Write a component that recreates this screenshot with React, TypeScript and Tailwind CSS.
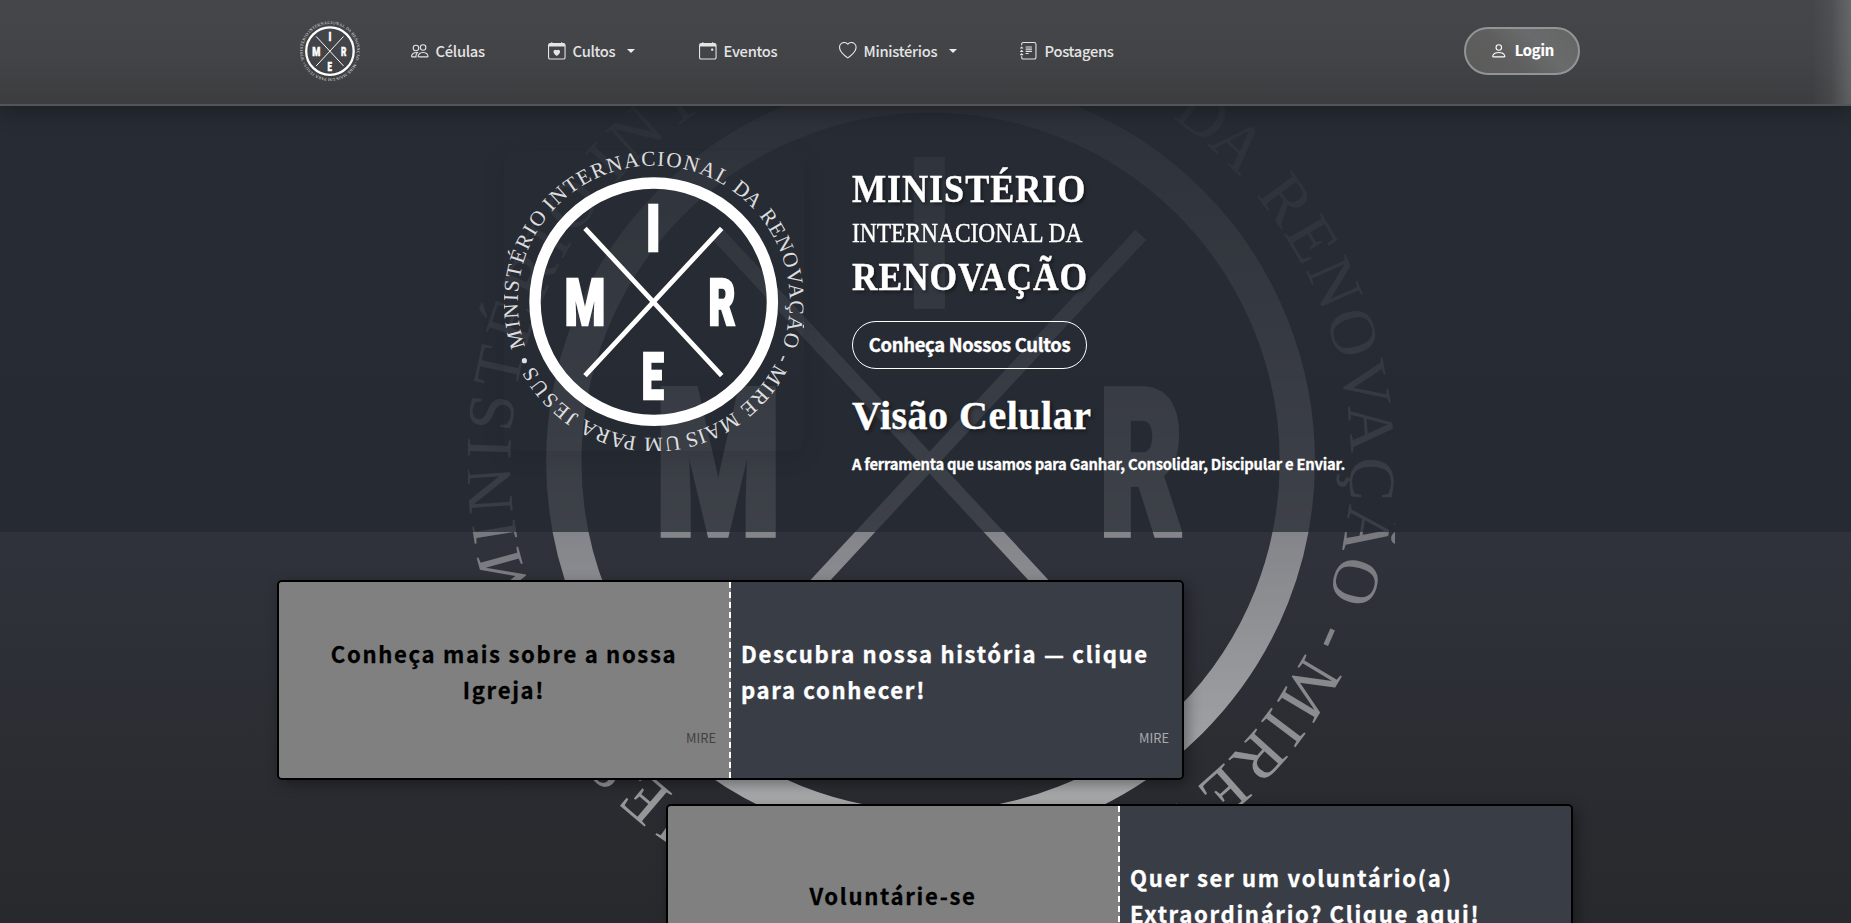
import { useId } from "react";
import { BsPeople, BsCalendarHeart, BsCalendarEvent, BsHeart, BsJournalText, BsPerson } from "react-icons/bs";

// Words on the ring with their start and end angles, clockwise from the top.
const words: [string, number, number][] = [
  ["MINISTÉRIO", 250.7, 308.8],
  ["INTERNACIONAL", 311.3, 391.6],
  ["DA", 34.9, 47.4],
  ["RENOVAÇÃO", 50.6, 109],
  ["-", 112.3, 114.3],
  ["MIRE", 117, 141],
  ["MAIS", 144, 167],
  ["UM", 169.2, 184],
  ["PARA", 187.2, 210.6],
  ["JESUS", 213.3, 242],
];

const R = 136;

function Logo({ className }: { className: string }) {
  const id = useId();
  return (
    <svg viewBox="0 0 300 300" className={className} fill="#fff" stroke="none">
      <defs>
        <path id={id} d={`M0 ${-R} A${R} ${R} 0 0 1 0 ${R} A${R} ${R} 0 0 1 0 ${-R}`} />
      </defs>
      <circle cx="149.7" cy="150.7" r="118.7" fill="none" stroke="#fff" strokeWidth="11.4" />
      <path d="M81 77.3 217.7 224.7M217.7 77.3 81 224.7" stroke="#fff" strokeWidth="4.8" />
      <g fontFamily="Roboto, sans-serif" fontWeight="900" fontSize="65.5" stroke="#fff" strokeWidth="2.5">
        <text x="142.1" y="100.1" textLength="14.5" lengthAdjust="spacingAndGlyphs">I</text>
        <text x="60.8" y="174.1" textLength="40.5" lengthAdjust="spacingAndGlyphs">M</text>
        <text x="204.4" y="174.1" textLength="27" lengthAdjust="spacingAndGlyphs">R</text>
        <text x="137.8" y="248.1" textLength="22" lengthAdjust="spacingAndGlyphs">E</text>
      </g>
      <g transform="translate(149.7 150.7)" fontFamily="Liberation Serif, serif" fontSize="21.2" fillOpacity="0.85">
        {words.map(([w, a, b]) => (
          <g key={w} transform={`rotate(${a})`}>
            <text textLength={((b - a) * Math.PI * R) / 180} lengthAdjust="spacing">
              <textPath href={`#${id}`}>{w}</textPath>
            </text>
          </g>
        ))}
        <circle cx="-129.3" cy="59" r="2.6" />
      </g>
    </svg>
  );
}

function Caret() {
  return <span className="ml-[12px] mt-px h-0 w-0 border-x-[4px] border-t-[4px] border-x-transparent border-t-[#ececec]" />;
}

const navItem = "flex items-center text-[#e4e4e5] text-[14.72px] leading-6 font-medium tracking-[-0.3px]";
const navIcon = "mr-[7px] mt-px h-[17.6px] w-[17.6px]";
const title = "origin-left font-['Liberation_Serif',serif] text-[40px] leading-[48px] font-bold whitespace-nowrap [-webkit-text-stroke:0.4px_#fff] [text-shadow:2px_2px_4px_rgba(0,0,0,0.5)]";

function Panel({ text, dark }: { text: string; dark?: boolean }) {
  return (
    <div
      className={
        dark
          ? "grid h-full flex-1 grid-rows-[125px_1fr] bg-[#393d46] pl-[10px] pr-[13px] text-white"
          : "grid h-full w-[452px] grid-rows-[125px_1fr] border-r-2 border-dashed border-white bg-[#808080] px-[13px] text-center text-black"
      }
    >
      <p
        className={`self-end text-[22.08px] leading-9 font-bold tracking-[1.68px] ${
          dark ? "[-webkit-text-stroke:0.35px_#fff]" : "px-5 [-webkit-text-stroke:0.3px_#000]"
        } ${text.length < 20 ? "pb-[18px]" : ""}`}
      >
        {text}
      </p>
      <span className={`pt-[21px] text-right text-[12.9px] leading-5 ${dark ? "text-[#a8aaae]" : "text-[#404040]"}`}>MIRE</span>
    </div>
  );
}

function Row({ a, b, className }: { a: string; b: string; className: string }) {
  return (
    <section className={`flex h-[200px] w-[907px] shrink-0 overflow-hidden rounded-[5px] border-2 border-black shadow-[4px_4px_14px_rgba(0,0,0,0.35)] ${className}`}>
      <Panel text={a} />
      <Panel text={b} dark />
    </section>
  );
}

export default function App() {
  return (
    <div className="relative isolate flex h-[923px] w-full flex-col overflow-hidden bg-[linear-gradient(180deg,#363c43_0%,#2f323a_60%,#2b2d33_80%,#27292c_100%)] font-['Noto_Sans_CJK_JP','Noto_Sans',sans-serif]">
      <div className="absolute left-[468px] top-[-4px] -z-10 h-[927px] w-[927px] [mask-image:linear-gradient(180deg,rgba(0,0,0,0.03),rgba(0,0,0,0.68))]">
        <Logo className="h-full w-full overflow-visible" />
      </div>

      <header className="relative z-10 flex h-[106px] shrink-0 items-center border-b-2 border-[#535557] bg-[linear-gradient(180deg,#454649,#434447_50%,#3c3d3f)] pb-[3px] shadow-[0_6px_20px_rgba(0,0,0,0.3)]">
        <Logo className="ml-[300px] h-[60px] w-[60px]" />
        <nav className="flex flex-1 items-center">
          <a className={`${navItem} ml-[51px] w-[137px]`}><BsPeople className={navIcon} />Células</a>
          <a className={`${navItem} w-[151px]`}><BsCalendarHeart className={navIcon} />Cultos<Caret /></a>
          <a className={`${navItem} w-[140px]`}><BsCalendarEvent className={navIcon} />Eventos</a>
          <a className={`${navItem} w-[181px]`}><BsHeart className={navIcon} />Ministérios<Caret /></a>
          <a className={navItem}><BsJournalText className={navIcon} />Postagens</a>
        </nav>
        <button className="mr-[271px] flex h-12 w-[116px] items-center justify-center rounded-[24px] border-2 border-[#939495] bg-[linear-gradient(45deg,#5a5a59,#5f5f5f_40%,#6a6b6c_65%,#646463)] text-[14.72px] font-bold tracking-[-0.2px] text-white [-webkit-text-stroke:0.2px_#fff]">
          <BsPerson className="mr-[7px] h-[17.6px] w-[17.6px]" />Login
        </button>
        <div className="absolute right-0 top-0 h-[104px] w-10 bg-[linear-gradient(90deg,transparent,rgba(255,255,255,0.05)_50%,rgba(255,255,255,0.18))]" />
      </header>

      <main className="flex h-[426px] shrink-0 bg-[#23272f]/[0.72] pl-[504px] pt-[45px]">
        <Logo className="h-[300px] w-[300px] shrink-0 rounded-xl shadow-[0_6px_24px_rgba(0,0,0,0.1)]" />
        <div className="ml-12 flex flex-col items-start text-white">
          <h1 className={`mt-[14px] scale-x-[0.905] tracking-[1px] ${title}`}>MINISTÉRIO</h1>
          <h2 className="origin-left scale-x-[0.885] font-['Liberation_Serif',serif] text-[26.5px] leading-[40px] whitespace-nowrap [-webkit-text-stroke:0.4px_#fff]">INTERNACIONAL DA</h2>
          <h1 className={`scale-x-[0.887] tracking-[1px] ${title}`}>RENOVAÇÃO</h1>
          <button className="mt-[20px] h-12 w-[235px] rounded-[24px] border border-white text-[18.4px] font-bold tracking-[-0.3px] whitespace-nowrap [-webkit-text-stroke:0.4px_#fff]">Conheça Nossos Cultos</button>
          <h2 className={`mt-[23px] tracking-[0.5px] ${title}`}>Visão Celular</h2>
          <p className="mt-[12px] text-[14.72px] leading-6 font-bold tracking-[-0.21px] whitespace-nowrap [-webkit-text-stroke:0.3px_#fff]">A ferramenta que usamos para Ganhar, Consolidar, Discipular e Enviar.</p>
        </div>
      </main>

      <div className="flex flex-col gap-6 pt-12">
        <Row className="ml-[277px]" a="Conheça mais sobre a nossa Igreja!" b="Descubra nossa história — clique para conhecer!" />
        <Row className="ml-[666px]" a="Voluntárie-se" b="Quer ser um voluntário(a) Extraordinário? Clique aqui!" />
      </div>
    </div>
  );
}
